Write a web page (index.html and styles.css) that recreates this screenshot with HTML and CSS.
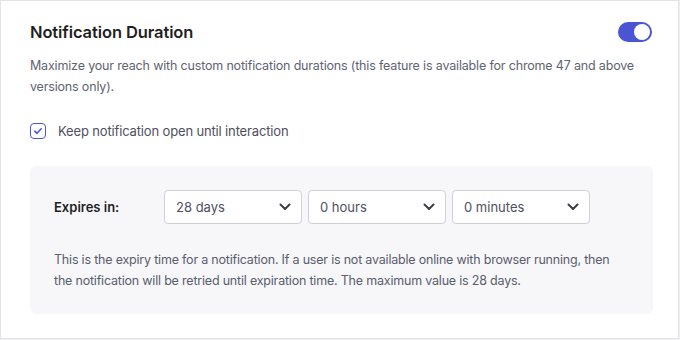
FILE: index.html
```html
<!DOCTYPE html>
<html>
<head>
<meta charset="utf-8">
<link rel="stylesheet" href="styles.css">
</head>
<body>
<div class="card">
  <div class="header">
    <h2 class="title">Notification Duration</h2>
    <span class="toggle"><span class="knob"></span></span>
  </div>
  <p class="desc">Maximize your reach with custom notification durations (this feature is available for chrome 47 and above versions only).</p>
  <label class="check-row">
    <span class="checkbox">
      <svg width="10" height="10" viewBox="0 0 10 10"><path d="M1.8 5.2 L4 7.3 L8.2 2.8" fill="none" stroke="#4b57d6" stroke-width="1.6" stroke-linecap="round" stroke-linejoin="round"/></svg>
    </span>
    <span class="check-label">Keep notification open until interaction</span>
  </label>
  <div class="panel">
    <div class="expires-row">
      <span class="expires-label">Expires in:</span>
      <div class="select"><span>28 days</span><svg class="chev" width="12" height="8" viewBox="0 0 12 8"><path d="M1.5 1.5 L6 6 L10.5 1.5" fill="none" stroke="#3d3f48" stroke-width="2" stroke-linecap="round" stroke-linejoin="round"/></svg></div>
      <div class="select"><span>0 hours</span><svg class="chev" width="12" height="8" viewBox="0 0 12 8"><path d="M1.5 1.5 L6 6 L10.5 1.5" fill="none" stroke="#3d3f48" stroke-width="2" stroke-linecap="round" stroke-linejoin="round"/></svg></div>
      <div class="select"><span>0 minutes</span><svg class="chev" width="12" height="8" viewBox="0 0 12 8"><path d="M1.5 1.5 L6 6 L10.5 1.5" fill="none" stroke="#3d3f48" stroke-width="2" stroke-linecap="round" stroke-linejoin="round"/></svg></div>
    </div>
    <p class="help">This is the expiry time for a notification. If a user is not available online with browser running, then the notification will be retried until expiration time. The maximum value is 28 days.</p>
  </div>
</div>
</body>
</html>
```
FILE: styles.css
```css
* { box-sizing: border-box; }
html, body { margin: 0; padding: 0; }
body {
  background: #efeff1;
  font-family: Inter, "Noto Sans", sans-serif;
  width: 680px;
  height: 340px;
}
.card {
  width: 679px;
  height: 339px;
  background: #ffffff;
  border: 1px solid #e3e3e6;
  padding: 17px 26px 0 29px;
}
.header {
  display: flex;
  align-items: center;
  justify-content: space-between;
  height: 28px;
}
.title {
  margin: 0;
  font-size: 16.5px;
  font-weight: 600;
  line-height: 28px;
  color: #1f1f23;
  letter-spacing: -0.1px;
}
.toggle {
  width: 34px;
  height: 20px;
  border-radius: 10px;
  background: #4a55d4;
  display: flex;
  align-items: center;
  justify-content: flex-end;
  padding-right: 2px;
}
.knob {
  width: 16px;
  height: 16px;
  border-radius: 50%;
  background: #fff;
}
.desc {
  margin: 9px 0 0 0;
  font-size: 12.5px;
  line-height: 21px;
  color: #606373;
  letter-spacing: -0.17px;
}
.check-row {
  display: flex;
  align-items: center;
  margin-top: 26px;
  height: 16px;
}
.checkbox {
  width: 16px;
  height: 16px;
  border: 1.5px solid #4b57d6;
  border-radius: 4px;
  display: flex;
  align-items: center;
  justify-content: center;
}
.check-label {
  margin-left: 12px;
  font-size: 13px;
  color: #4e5060;
  letter-spacing: -0.15px;
}
.panel {
  margin-top: 27px;
  width: 623px;
  background: #f7f7fa;
  border-radius: 6px;
  padding: 24px 24px 23px 24px;
}
.expires-row {
  display: flex;
  align-items: center;
  gap: 6px;
}
.expires-label {
  width: 104px;
  font-size: 13px;
  font-weight: 600;
  color: #1f1f23;
}
.select {
  width: 138px;
  height: 34px;
  background: #fff;
  border: 1px solid #cfd0d8;
  border-radius: 4px;
  display: flex;
  align-items: center;
  justify-content: space-between;
  padding: 0 10px 0 11px;
  font-size: 13px;
  color: #4e5060;
}
.chev { display: block; }
.help {
  margin: 25px 0 0 0;
  max-width: 570px;
  font-size: 12.5px;
  line-height: 21px;
  color: #5a5d6c;
  letter-spacing: -0.2px;
}
```
